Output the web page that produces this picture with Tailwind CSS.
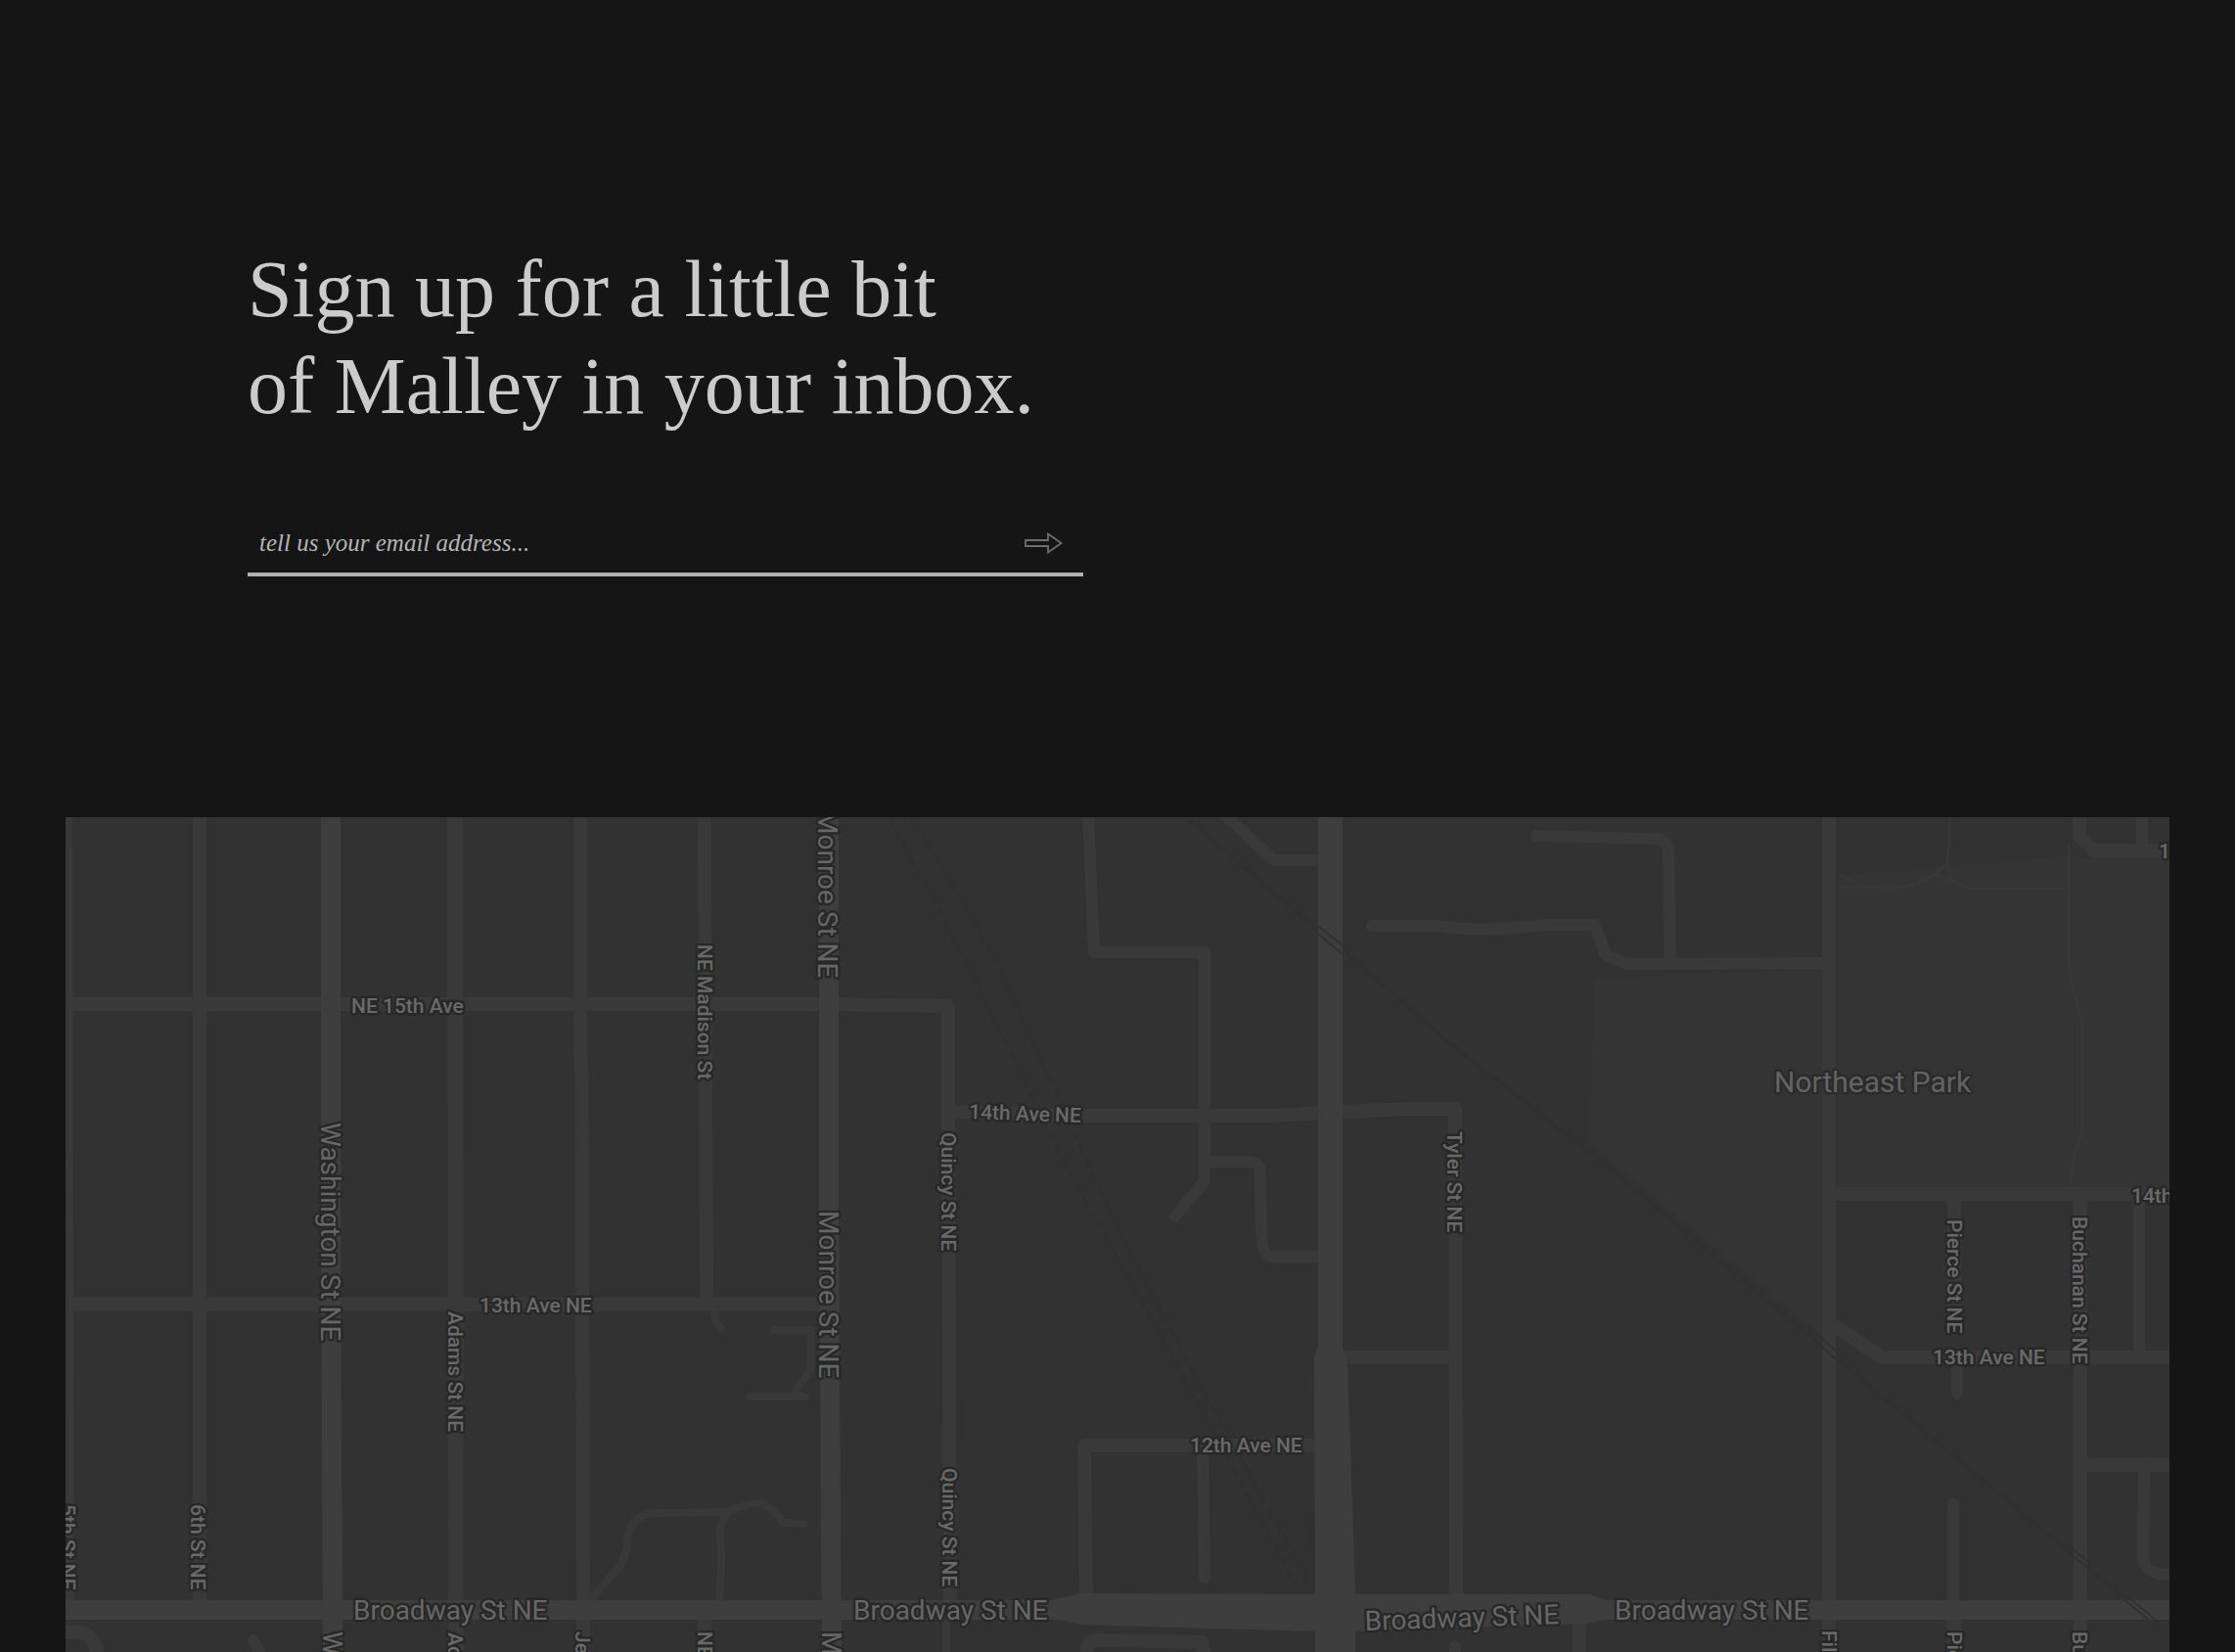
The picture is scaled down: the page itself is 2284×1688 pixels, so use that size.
<!DOCTYPE html>
<html lang="en">
<head>
<meta charset="utf-8">
<meta name="viewport" content="width=device-width, initial-scale=1">
<title>Malley newsletter</title>
<script src="https://cdn.jsdelivr.net/npm/@tailwindcss/browser@4"></script>
</head>
<body class="flex min-h-screen flex-col bg-[#151515] font-['Liberation_Serif',serif]">
<main class="flex flex-1 flex-col">
  <section class="px-6 py-24 md:px-24 xl:px-[253px] xl:py-[246px]">
    <h1 class="text-5xl text-[#cbcbcb] xl:text-[82px] xl:leading-[99px]">Sign up for a little bit<br>of Malley in your inbox.</h1>
    <form class="mt-20 flex h-[65px] w-full max-w-[854px] items-center border-b-4 border-[#b0b0b0] pr-5 pl-3">
      <label for="email" class="sr-only">Email address</label>
      <input id="email" type="email" placeholder="tell us your email address..." class="min-w-0 flex-1 bg-transparent text-[25px] leading-8 text-[#b4b4b4] italic outline-none placeholder:text-[#b4b4b4]">
      <button type="submit" aria-label="Sign up" class="shrink-0">
        <svg class="block" width="42" height="24" viewBox="0 0 42 24" fill="none" stroke="#6e6e6e" stroke-width="1.8"><path d="M3 9H26V2.500L39.500 12L26 21.500V15H3Z"/></svg>
      </button>
    </form>
  </section>
  <section aria-label="Map" class="mx-6 h-[853px] overflow-hidden bg-[#323232] xl:mx-[67px]">
    <svg class="block h-full w-full font-['Roboto',sans-serif]" viewBox="67 835 2150 853" preserveAspectRatio="xMidYMin slice" fill="none">
      <!-- park land -->
      <path fill="#343434" d="M1630 1000L1862 990V1365L1622 1165ZM1878 895L2113 875L2140 876H2217V1213H1878Z"/>
      <!-- rail lines -->
      <g stroke="#303030" stroke-width="3" stroke-dasharray="10 5">
        <path d="M908 835L960 930L1095 1200L1150 1300L1230 1445L1325 1620"/>
        <path d="M932 835L1020 985L1085 1130L1150 1270L1240 1440L1340 1620"/>
      </g>
      <path stroke="#303030" stroke-width="4" d="M1212 835L1347 951L1373 971L1480 1065L1640 1190L1700 1240L1865 1378L2110 1582L2150 1615L2205 1658"/>
      <!-- park paths -->
      <g stroke="#383838" stroke-width="2">
        <path d="M1993 835L1990 885L1994 900M1880 893Q1900 908 1932 908Q1970 905 1988 883M1880 906L1932 908M1975 893L1995 900L2013 908H2113"/>
        <path d="M2114 863V980L2116 1000L2128 1045V1155Q2117 1185 2116 1210"/>
      </g>
      <!-- lanes -->
      <g stroke="#383838" stroke-width="8" stroke-linecap="round" stroke-linejoin="round">
        <path d="M729 1335L731 1350L737 1357M791 1359H829L828 1402L814 1418L813 1427M767 1427H823"/>
        <path d="M605 1632L632 1602Q640 1592 641 1575Q644 1546 672 1546L742 1545Q775 1532 782 1538Q795 1545 800 1556L822 1557M743 1547Q732 1560 737 1580Q738 1600 735 1635M967 1650V1690"/>
      </g>
      <!-- local streets -->
      <g stroke="#393939" stroke-width="14" stroke-linejoin="round">
        <path d="M67 835L69 1645M204 835V1640M593 835V1070L595 1110L596 1690M720 835L722 1333M720 1650V1690M67 1026H845L969 1028V1140L971 1645M67 1333H850"/>
        <path stroke-width="16" d="M465 835L466 1690"/>
        <path d="M969 1136L1040 1138L1108 1140H1300L1347 1137L1440 1133H1487L1488 1640M1374 1387H1485M1343 1477H1108L1110 1635"/>
        <path d="M1869 835V1690M1869 1220H2217M1997 1220L1997 1350M2126 1220V1690M1872 1353L1923 1387H2217M2126 1497H2217M1614 1650V1690M1997 1650V1690"/>
        <path d="M67 1668H80Q94 1668 100 1690M1110 1692Q1110 1676 1122 1676L1228 1678L1231 1690M2125 835V855L2140 869H2217"/>
      </g>
      <g stroke="#393939" stroke-width="12" stroke-linecap="round" stroke-linejoin="round">
        <path d="M1112 830L1118 973H1231V1207L1201 1243M1237 1187H1276Q1288 1187 1288 1199L1289 1260Q1290 1284 1300 1284H1347M1229 1484L1231 1612"/>
        <path d="M1250 831L1302 879H1347M1570 854L1692 857Q1704 857 1705 870L1707 985M1402 946H1470Q1510 953 1580 945H1630L1641 976L1662 985L1862 984"/>
        <path d="M2000 1400V1423M1996 1537V1645M2186 1220V1387M2189 835V869M2191 1500L2190 1590Q2192 1609 2217 1609M259 1676L266 1690M1487 1682V1692"/>
      </g>
      <!-- arterials -->
      <g stroke="#3e3e3e" stroke-width="20">
        <path d="M338 835V1250L340 1690M847 835L847 1250L850 1690M67 1645H1085M1625 1645H2217"/>
      </g>
      <path fill="#3e3e3e" d="M1347 835H1372V1376L1377 1393L1383 1565L1385 1629H1625L1640 1635V1655L1620 1659L1385 1667V1688H1344V1667L1105 1660L1070 1652V1636L1105 1628L1344 1629L1343 1385L1347 1376Z"/>
      <!-- rail crossings -->
      <g stroke="#313131" stroke-width="2">
        <path d="M1347 946L1373 967M1347 954L1373 976"/>
        <path d="M1861 1367L1877 1381M1861 1375L1877 1390M2114 1580L2134 1596M2114 1587L2134 1602M2170 1634L2197 1656M2177 1634L2204 1656"/>
      </g>

      <!-- street names -->
      <g class="text-[21px] font-medium" fill="#696969" stroke="#282828" stroke-width="5" stroke-linejoin="round" paint-order="stroke">
        <text x="359" y="1035">NE 15th Ave</text>
        <text x="490" y="1341">13th Ave NE</text>
        <text transform="translate(990 1143) rotate(2)">14th Ave NE</text>
        <text x="1216" y="1484">12th Ave NE</text>
        <text x="1975" y="1394">13th Ave NE</text>
        <text x="2178" y="1229">14th Ave NE</text>
        <text x="2206" y="877">15th Ave NE</text>
        <text transform="translate(62 1537) rotate(90)">5th St NE</text>
        <text transform="translate(195 1537) rotate(90)">6th St NE</text>
        <text transform="translate(458 1340) rotate(90)">Adams St NE</text>
        <text transform="translate(458 1668) rotate(90)">Adams St NE</text>
        <text transform="translate(588 1667) rotate(90)">Jefferson St NE</text>
        <text transform="translate(713 965) rotate(90)">NE Madison St</text>
        <text transform="translate(713 1667) rotate(90)">NE Madison St</text>
        <text transform="translate(962 1157) rotate(90)">Quincy St NE</text>
        <text transform="translate(963 1500) rotate(90)">Quincy St NE</text>
        <text transform="translate(1479 1156) rotate(90)">Tyler St NE</text>
        <text transform="translate(1990 1246) rotate(90)">Pierce St NE</text>
        <text transform="translate(1990 1667) rotate(90)">Pierce St NE</text>
        <text transform="translate(2118 1243) rotate(90)">Buchanan St NE</text>
        <text transform="translate(2118 1667) rotate(90)">Buchanan St NE</text>
        <text transform="translate(1862 1666) rotate(90)">Fillmore St NE</text>
      </g>
      <g class="text-[28px]" fill="#666666" stroke="#282828" stroke-width="5" stroke-linejoin="round" paint-order="stroke">
        <text x="361" y="1655">Broadway St NE</text>
        <text x="872" y="1655">Broadway St NE</text>
        <text transform="translate(1395 1666) rotate(-2)">Broadway St NE</text>
        <text x="1650" y="1655">Broadway St NE</text>
        <text transform="translate(328 1147) rotate(90)">Washington St NE</text>
        <text transform="translate(330 1667) rotate(90)">Washington St NE</text>
        <text transform="translate(836 828) rotate(90)">Monroe St NE</text>
        <text transform="translate(837 1237) rotate(90)">Monroe St NE</text>
        <text transform="translate(840 1667) rotate(90)">Monroe St NE</text>
      </g>
      <text class="text-[30px]" x="1813" y="1116" fill="#636363" stroke="#2b2b2b" stroke-width="5" stroke-linejoin="round" paint-order="stroke">Northeast Park</text>
    </svg>
  </section>
</main>
</body>
</html>
